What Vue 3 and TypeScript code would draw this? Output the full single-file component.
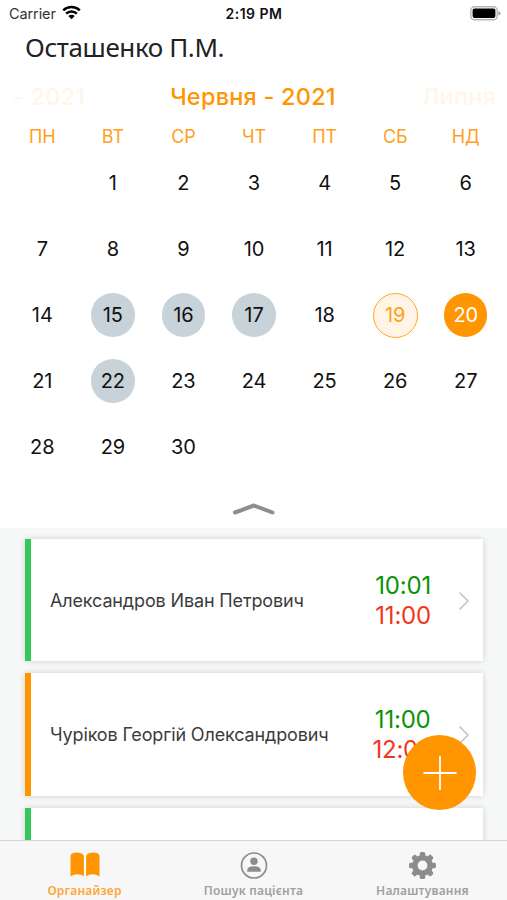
<script setup lang="ts">
type DayState = 'plain' | 'busy' | 'today' | 'selected'

interface Day {
  key: number
  label: string
  state: DayState
}

interface Appointment {
  id: number
  name: string
  start: string
  end: string
  tone: 'green' | 'orange'
}

const weekdays: string[] = ['ПН', 'ВТ', 'СР', 'ЧТ', 'ПТ', 'СБ', 'НД']
const busyDays = new Set<number>([15, 16, 17, 22])
const today = 19
const selected = 20

function stateOf(day: number): DayState {
  if (day === selected) return 'selected'
  if (day === today) return 'today'
  return busyDays.has(day) ? 'busy' : 'plain'
}

// June 2021 starts on a Tuesday, so the first cell is blank.
const days: Day[] = Array.from({ length: 31 }, (_, i) => ({
  key: i,
  label: i === 0 ? '' : String(i),
  state: stateOf(i),
}))

const appointments: Appointment[] = [
  { id: 1, name: 'Александров Иван Петрович', start: '10:01', end: '11:00', tone: 'green' },
  { id: 2, name: 'Чуріков Георгій Олександрович', start: '11:00', end: '12:00', tone: 'orange' },
  { id: 3, name: '', start: '', end: '', tone: 'green' },
]

const teeth: number[] = [0, 45, 90, 135, 180, 225, 270, 315]
</script>

<template>
  <div class="screen">
    <header class="status">
      <div class="carrier">
        <span>Carrier</span>
        <svg class="wifi" width="19" height="15" viewBox="0 0 19 15">
          <g fill="none" stroke="#000" stroke-width="2.4">
            <path d="M1.2 5.4a12 12 0 0 1 16.6 0" />
            <path d="M4.1 8.6a7.8 7.8 0 0 1 10.8 0" />
          </g>
          <path d="M6.3 11a4.6 4.6 0 0 1 6.4 0L9.5 14.2z" />
        </svg>
      </div>
      <span class="clock">2:19 PM</span>
      <svg class="battery" width="31" height="15" viewBox="0 0 31 15">
        <rect x="0.8" y="0.8" width="26.4" height="13" rx="3.8" fill="#fff" stroke="#b5b5b5" stroke-width="1.4" />
        <rect x="2.6" y="2.6" width="22.8" height="9.4" rx="2" />
        <path d="M28.5 5q2 .8 2 2.3t-2 2.3z" fill="#999" />
      </svg>
    </header>

    <h1 class="title">Осташенко П.М.</h1>

    <div class="months">
      <span class="month faded prev">- 2021</span>
      <span class="month current">Червня - 2021</span>
      <span class="month faded next">Липня</span>
    </div>

    <section class="calendar">
      <span v-for="w in weekdays" :key="w" class="weekday">{{ w }}</span>
      <div v-for="d in days" :key="d.key" class="cell">
        <span class="day" :class="d.state">{{ d.label }}</span>
      </div>
    </section>

    <div class="collapse">
      <svg width="44" height="16" viewBox="0 0 44 16">
        <path d="M3 12.500 22 5.500 40.500 12.500" fill="none" stroke="#8e8e8e" stroke-width="4" stroke-linecap="round" stroke-linejoin="round" />
      </svg>
    </div>

    <main class="list">
      <article v-for="a in appointments" :key="a.id" class="card" :class="a.tone">
        <span class="name">{{ a.name }}</span>
        <div v-if="a.start" class="times">
          <span class="start">{{ a.start }}</span>
          <span class="end">{{ a.end }}</span>
        </div>
        <svg v-if="a.start" class="chevron" width="12" height="20" viewBox="0 0 12 20">
          <path d="M1.500 1.500 10 10 1.500 18.500" fill="none" stroke="#c6c6c8" stroke-width="1.700" />
        </svg>
      </article>
    </main>

    <button class="fab" type="button">
      <svg width="36" height="36" viewBox="0 0 36 36">
        <path d="M18 1v34M1.500 18h33" fill="none" stroke="#fff" stroke-width="1.800" />
      </svg>
    </button>

    <nav class="tabs">
      <div class="tab active">
        <svg width="32" height="30" viewBox="0 0 32 30">
          <path fill="currentColor" d="M1.500 5.500Q2.500 2.500 8 2.500q4.800 0 6.900 3v20.700Q12 24.200 8.500 24.200 4.500 24.200 1.500 26.500zM30.500 5.500Q29.500 2.500 24 2.500q-4.800 0-6.900 3v20.700q2.900-2 6.400-2 4 0 7 2.300z" />
        </svg>
        <span class="tab-label">Органайзер</span>
      </div>
      <div class="tab">
        <svg width="30" height="30" viewBox="0 0 30 30">
          <circle cx="15" cy="15.500" r="12.500" fill="none" stroke="currentColor" stroke-width="1.700" />
          <circle cx="15" cy="11.300" r="3.700" fill="currentColor" />
          <path fill="currentColor" d="M8.200 21.800v-1.300q0-4.300 6.800-4.300t6.800 4.300v1.300z" />
        </svg>
        <span class="tab-label">Пошук пацієнта</span>
      </div>
      <div class="tab">
        <svg width="30" height="30" viewBox="0 0 30 30">
          <g transform="translate(14.500 15.500)">
            <circle r="7.700" fill="none" stroke="currentColor" stroke-width="5.600" />
            <rect v-for="t in teeth" :key="t" x="-2.700" y="-13.500" width="5.400" height="6" rx="1.600" fill="currentColor" :transform="`rotate(${t})`" />
          </g>
        </svg>
        <span class="tab-label">Налаштування</span>
      </div>
    </nav>
  </div>
</template>

<style>
body {
  margin: 0;
  background: #fff;
}
</style>

<style scoped>
.screen {
  position: relative;
  display: flex;
  flex-direction: column;
  width: 507px;
  height: 900px;
  overflow: hidden;
  background: #fff;
  font-family: Inter, 'Liberation Sans', sans-serif;
  color: #111;
}

.status {
  display: grid;
  grid-template-columns: 1fr auto 1fr;
  align-items: center;
  height: 27px;
  padding: 0 6px 0 9px;
  font-size: 14.5px;
  flex: none;
}

.carrier {
  display: flex;
  align-items: center;
  gap: 6px;
  color: #333;
  letter-spacing: -0.1px;
}

.wifi {
  margin-top: -2px;
}

.clock {
  margin-right: 2px;
  font-weight: 600;
  font-size: 14px;
  letter-spacing: 0.5px;
}

.battery {
  justify-self: end;
}

.title {
  margin: 0;
  padding-left: 25px;
  height: 43px;
  flex: none;
  font: 400 26px/41px 'Noto Sans', 'Open Sans', sans-serif;
  letter-spacing: -0.4px;
  color: #222;
}

.months {
  display: grid;
  grid-template-columns: 1fr auto 1fr;
  align-items: center;
  box-sizing: border-box;
  height: 54px;
  padding: 0 11px 2px 13px;
  flex: none;
}

.month {
  font-size: 23.5px;
  font-weight: 500;
  letter-spacing: 0.22px;
  color: #ff9500;
  white-space: nowrap;
}

.current {
  margin-right: 3px;
}

.faded {
  color: #fff6e9;
}

.next {
  justify-self: end;
}

.calendar {
  display: grid;
  grid-template-columns: repeat(7, 1fr);
  grid-template-rows: 26px repeat(5, 66px);
  height: 356px;
  padding: 0 6px 0 7px;
  flex: none;
}

.weekday {
  text-align: center;
  font-size: 18px;
  line-height: 25px;
  letter-spacing: -0.2px;
  color: #ff9f22;
}

.cell {
  display: flex;
  align-items: center;
  justify-content: center;
}

.day {
  box-sizing: border-box;
  display: flex;
  align-items: center;
  justify-content: center;
  width: 43.5px;
  height: 43.5px;
  border-radius: 50%;
  font-size: 20px;
  letter-spacing: -0.1px;
}

.busy {
  background: #c8d2d9;
}

.today {
  width: 45px;
  height: 45px;
  background: #fff4e5;
  border: 1.5px solid #ffa52b;
  color: #ff9f22;
}

.selected {
  background: #ff9500;
  color: #fff;
}

.collapse {
  display: flex;
  justify-content: center;
  align-items: center;
  box-sizing: border-box;
  height: 48px;
  padding-top: 7px;
  flex: none;
}

.list {
  display: flex;
  flex-direction: column;
  gap: 12px;
  flex: 1;
  min-height: 0;
  overflow: hidden;
  padding: 11px 24px 0 25px;
  background: #f6f8f8;
}

.card {
  box-sizing: border-box;
  display: flex;
  align-items: center;
  flex: none;
  height: 122.3px;
  padding: 1px 13px 0 19px;
  background: #fff;
  border-left: 6.5px solid #34c759;
  box-shadow: 0 0 6px rgba(0, 0, 0, 0.16);
}

.card.orange {
  border-left-color: #ff9500;
}

.name {
  flex: 1;
  font-size: 18px;
  letter-spacing: -0.14px;
  color: #3c3c3c;
  white-space: nowrap;
}

.times {
  display: flex;
  flex-direction: column;
  align-items: center;
  margin-right: 27px;
  font-size: 24px;
  line-height: 29.5px;
  letter-spacing: -0.2px;
}

.start {
  color: #0a930a;
}

.end {
  color: #f5351b;
}

.chevron {
  flex: none;
}

.orange .times {
  margin-right: 25px;
}

.fab {
  position: absolute;
  left: 403px;
  top: 735px;
  display: flex;
  align-items: center;
  justify-content: center;
  width: 73px;
  height: 75px;
  padding: 0;
  border: 0;
  border-radius: 50%;
  background: #ff9500;
}

.tabs {
  display: grid;
  grid-template-columns: repeat(3, 1fr);
  box-sizing: border-box;
  height: 60px;
  flex: none;
  border-top: 1px solid #d6d6d6;
  background: #f7f7f7;
}

.tab {
  display: flex;
  flex-direction: column;
  align-items: center;
  padding-top: 9px;
  color: #8c8c8c;
}

.tab-label {
  margin-top: 3px;
  font: 600 12px/16px 'Noto Sans', 'Open Sans', sans-serif;
  letter-spacing: 0.2px;
  color: #a0a0a0;
  white-space: nowrap;
}

.active {
  color: #ff9500;
}

.active .tab-label {
  color: #ffa63a;
}
</style>
